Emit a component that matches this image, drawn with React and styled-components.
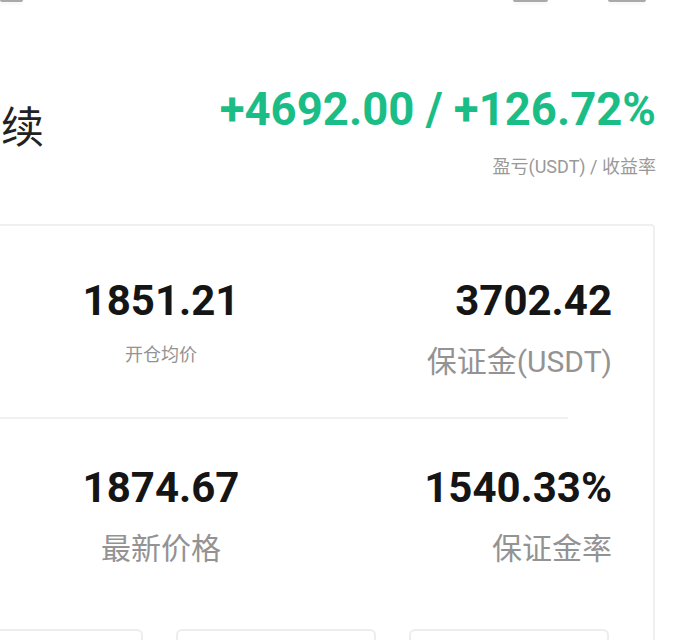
import React from "react";
import styled, { createGlobalStyle } from "styled-components";

const GlobalStyle = createGlobalStyle`
  html, body {
    margin: 0;
    padding: 0;
    background: #ffffff;
    overflow: hidden;
  }
  body {
    font-family: Roboto, "Noto Sans CJK SC", "Noto Sans", sans-serif;
  }
`;

const Page = styled.div`
  width: 696px;
  height: 640px;
  overflow: hidden;
  background: #ffffff;
`;

const TopBar = styled.div`
  display: flex;
  align-items: flex-start;
  height: 8px;
`;

const Blip = styled.div`
  flex: none;
  width: ${(p) => p.$w}px;
  margin-left: ${(p) => p.$ml}px;
  height: 2px;
  background: #a9a9a9;
  border-radius: 0 0 3px 3px;
  box-shadow: 0 2px 3px rgba(0, 0, 0, 0.05);
`;

const Header = styled.div`
  display: flex;
  justify-content: space-between;
  align-items: flex-start;
  margin-top: 79px;
  padding-right: 40px;
`;

const Title = styled.div`
  flex: none;
  width: 300px;
  margin-left: -256px;
  margin-top: 20px;
  text-align: right;
  white-space: nowrap;
  font-size: 43px;
  line-height: 1;
  color: #222222;
`;

const PnlBlock = styled.div`
  display: flex;
  flex-direction: column;
  align-items: flex-end;
`;

const Pnl = styled.div`
  font-size: 45.5px;
  line-height: 1;
  font-weight: 700;
  color: #1bbd87;
  white-space: nowrap;
`;

const PnlLabel = styled.div`
  margin-top: 25px;
  font-size: 18px;
  line-height: 1;
  color: #999999;
  white-space: nowrap;
`;

const Card = styled.div`
  margin-top: 48px;
  margin-left: -100px;
  width: 755px;
  box-sizing: border-box;
  border: 2px solid #efefef;
  border-radius: 4px;
  background: #ffffff;
`;

const StatsRow = styled.div`
  display: grid;
  grid-template-columns: 160px 1fr;
  padding: ${(p) => p.$pt}px 41px ${(p) => p.$pb}px 179px;
`;

const Cell = styled.div`
  display: flex;
  flex-direction: column;
  align-items: ${(p) => (p.$align === "right" ? "flex-end" : "center")};
  text-align: ${(p) => p.$align};
`;

const Value = styled.div`
  font-size: 42px;
  line-height: 1;
  font-weight: 700;
  color: #151515;
  white-space: nowrap;
`;

const Label = styled.div`
  margin-top: ${(p) => (p.$small ? 24 : 25)}px;
  font-size: ${(p) => (p.$small ? 18 : 30)}px;
  line-height: 1;
  color: #939393;
  white-space: nowrap;
`;

const Divider = styled.div`
  height: 2px;
  margin-right: 85px;
  background: #f0f0f0;
`;

const Actions = styled.div`
  display: grid;
  grid-template-columns: 200px 200px 200px;
  column-gap: 33px;
  padding: 0 43px 0 41px;
  margin-top: 65px;
`;

const ActionBox = styled.div`
  height: 60px;
  box-sizing: border-box;
  border: 2px solid #ededed;
  border-radius: 6px;
  background: #ffffff;
`;

export default function App() {
  return (
    <>
      <GlobalStyle />
      <Page>
        <TopBar>
          <Blip $w={23} $ml={0} />
          <Blip $w={35} $ml={490} />
          <Blip $w={38} $ml={60} />
        </TopBar>
        <Header>
          <Title>ETHUSDT 永续</Title>
          <PnlBlock>
            <Pnl>+4692.00 / +126.72%</Pnl>
            <PnlLabel>盈亏(USDT) / 收益率</PnlLabel>
          </PnlBlock>
        </Header>
        <Card>
          <StatsRow $pt={54} $pb={40}>
            <Cell $align="center">
              <Value>1851.21</Value>
              <Label $small>开仓均价</Label>
            </Cell>
            <Cell $align="right">
              <Value>3702.42</Value>
              <Label>保证金(USDT)</Label>
            </Cell>
          </StatsRow>
          <Divider />
          <StatsRow $pt={48} $pb={0}>
            <Cell $align="center">
              <Value>1874.67</Value>
              <Label>最新价格</Label>
            </Cell>
            <Cell $align="right">
              <Value>1540.33%</Value>
              <Label>保证金率</Label>
            </Cell>
          </StatsRow>
          <Actions>
            <ActionBox />
            <ActionBox />
            <ActionBox />
          </Actions>
        </Card>
      </Page>
    </>
  );
}
